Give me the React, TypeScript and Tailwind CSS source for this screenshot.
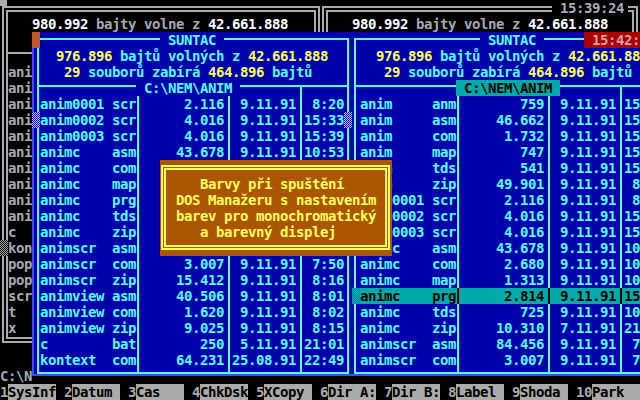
type FileRow = [string, string, string, string, string];

const leftFiles: FileRow[] = [
    ["anim0001", "scr", "2.116", "9.11.91", "8:20"],
    ["anim0002", "scr", "4.016", "9.11.91", "15:33"],
    ["anim0003", "scr", "4.016", "9.11.91", "15:39"],
    ["animc", "asm", "43.678", "9.11.91", "10:53"],
    ["animc", "com", "2.680", "9.11.91", "10:54"],
    ["animc", "map", "1.313", "9.11.91", "10:54"],
    ["animc", "prg", "2.814", "9.11.91", "15:40"],
    ["animc", "tds", "725", "9.11.91", "10:54"],
    ["animc", "zip", "10.310", "7.11.91", "21:12"],
    ["animscr", "asm", "84.456", "9.11.91", "7:49"],
    ["animscr", "com", "3.007", "9.11.91", "7:50"],
    ["animscr", "zip", "15.412", "9.11.91", "8:16"],
    ["animview", "asm", "40.506", "9.11.91", "8:01"],
    ["animview", "com", "1.620", "9.11.91", "8:02"],
    ["animview", "zip", "9.025", "9.11.91", "8:15"],
    ["c", "bat", "250", "5.11.91", "21:01"],
    ["kontext", "com", "64.231", "25.08.91", "22:49"],
];

const rightFiles: FileRow[] = [
    ["anim", "anm", "759", "9.11.91", "15:31"],
    ["anim", "asm", "46.662", "9.11.91", "15:30"],
    ["anim", "com", "1.732", "9.11.91", "15:31"],
    ["anim", "map", "747", "9.11.91", "15:31"],
    ["anim", "tds", "541", "9.11.91", "15:31"],
    ["anim", "zip", "49.901", "9.11.91", "8:22"],
    ["anim0001", "scr", "2.116", "9.11.91", "8:20"],
    ["anim0002", "scr", "4.016", "9.11.91", "15:33"],
    ["anim0003", "scr", "4.016", "9.11.91", "15:39"],
    ["animc", "asm", "43.678", "9.11.91", "10:53"],
    ["animc", "com", "2.680", "9.11.91", "10:54"],
    ["animc", "map", "1.313", "9.11.91", "10:54"],
    ["animc", "prg", "2.814", "9.11.91", "15:40"],
    ["animc", "tds", "725", "9.11.91", "10:54"],
    ["animc", "zip", "10.310", "7.11.91", "21:12"],
    ["animscr", "asm", "84.456", "9.11.91", "7:49"],
    ["animscr", "com", "3.007", "9.11.91", "7:50"],
];

const backNames = [
    "anim", "anim", "anim", "anim", "anim", "anim", "anim0001", "anim0002", "anim0003", "animc",
    "c", "kontext", "popup", "popdir", "scr", "t", "x",
];

const fkeys: [string, string][] = [
    ["1", "SysInf"],
    ["2", "Datum"],
    ["3", "Cas"],
    ["4", "ChkDsk"],
    ["5", "XCopy"],
    ["6", "Dir A:"],
    ["7", "Dir B:"],
    ["8", "Label"],
    ["9", "Shoda"],
    ["10", "Park"],
];

const panelCls = {
    left: {
        box: "ml-[5px] w-[312px]",
        colA: "w-[100px] pl-[1px]",
        title: "pl-[121px]",
        info1: "pl-[17px]",
        info2: "pl-[25px]",
        path: "pl-[97px]",
    },
    right: {
        box: "ml-[2px] w-[315px]",
        colA: "w-[103px] pl-[4px]",
        title: "pl-[124px]",
        info1: "pl-[20px]",
        info2: "pl-[28px]",
        path: "pl-[100px]",
    },
};

function FileLine({ f, active, colA, h = "h-4" }: { f?: FileRow; active?: boolean; colA: string; h?: string }) {
    const line = active ? "border-black" : "border-[#55ffff]";
    return (
        <div className={`flex shrink-0 ${h} ${active ? "bg-[#00aaaa] text-black" : "text-[#55ffff]"}`}>
            <div className={`flex shrink-0 border-r-2 ${line} ${colA}`}>
                <span className="w-[72px] shrink-0 whitespace-pre">{f?.[0]}</span>
                <span className="whitespace-pre">{f?.[1]}</span>
            </div>
            <div className={`w-[91px] shrink-0 border-r-2 ${line} pr-[4px] text-right`}>{f?.[2]}</div>
            <div className={`w-[72px] shrink-0 border-r-2 ${line} pr-[4px] text-right`}>{f?.[3]}</div>
            <div className="flex-1 pr-[3px] text-right whitespace-pre">{f?.[4]}</div>
        </div>
    );
}

function Panel({ side, files, activeRow }: { side: "left" | "right"; files: FileRow[]; activeRow?: number }) {
    const c = panelCls[side];
    const isRight = side === "right";

    return (
        <div className="relative w-[320px] shrink-0 pt-[6px]">
            <div className={`flex h-[336px] flex-col border-2 border-[#55ffff] ${c.box}`}>

                {/* title on the top line */}
                <div className={`flex h-2 shrink-0 ${c.title}`}>
                    <div className="-mt-2 h-4 w-16 bg-[#0000aa] text-center text-[#55ffff]">SUNTAC</div>
                </div>

                <div className={`h-4 shrink-0 whitespace-pre text-[#55ffff] ${c.info1}`}>
                    <span className="text-[#ffff55]">976.896</span>
                    {" bajtů volných z "}
                    <span className="text-[#ffff55]">42.661.888</span>
                </div>
                <div className={`h-4 shrink-0 whitespace-pre text-[#55ffff] ${c.info2}`}>
                    <span className="text-[#ffff55]">29</span>
                    {" souborů zabírá "}
                    <span className="text-[#ffff55]">464.896</span>
                    {" bajtů"}
                </div>

                {/* path on the separator */}
                <div className={`flex h-[7px] shrink-0 border-b-2 border-[#55ffff] ${c.path}`}>
                    <div
                        className={`relative z-10 h-4 shrink-0 whitespace-pre ${
                            isRight ? "bg-[#00aaaa] text-black" : "bg-[#0000aa] text-[#55ffff]"
                        }`}
                    >
                        {" C:\\NEM\\ANIM "}
                    </div>
                </div>

                <FileLine colA={c.colA} h="h-[9px]" />
                {files.map((f, i) => (
                    <FileLine key={`${f[0]}-${f[1]}-${i}`} f={f} colA={c.colA} active={i === activeRow} />
                ))}
                <FileLine colA={c.colA} h="h-1" />
            </div>

            {isRight ? (
                <>
                    <div className="absolute left-[232px] top-0 h-4 whitespace-pre bg-[#aa0000] pl-2 text-[#d4a4a4]">
                        15:42:07
                    </div>
                    <div className="absolute left-0 top-[256px] h-4 w-2 bg-[repeating-conic-gradient(#2a6ad0_0%_25%,#00aaaa_0%_50%)] bg-[length:2px_2px]" />
                </>
            ) : (
                <>
                    <div className="absolute left-0 top-0 h-4 w-2 bg-[#c0582c]" />
                    <div className="absolute left-0 top-[80px] h-4 w-2 bg-[repeating-conic-gradient(#55ffff_0%_25%,#0000aa_0%_50%)] bg-[length:2px_2px]" />
                    <div className="absolute left-[312px] top-[80px] h-4 w-2 bg-[repeating-conic-gradient(#55ffff_0%_25%,#0000aa_0%_50%)] bg-[length:2px_2px]" />
                </>
            )}
        </div>
    );
}

function FreeLine() {
    return (
        <div className="h-4 whitespace-pre pl-6 text-[#aaaaaa]">
            <span className="text-white">980.992</span>
            {" bajty volne z "}
            <span className="text-white">42.661.888</span>
        </div>
    );
}

export default function App() {
    return (
        <div className="relative h-[400px] w-[640px] overflow-hidden bg-black font-['DejaVu_Sans_Mono',monospace] text-[14px] leading-4 font-bold tracking-[-0.43px]">
            <div className="relative h-[368px]">

                {/* background manager */}
                <div className="flex gap-[2px] pl-[2px] pt-[6px]">
                    <div className="flex h-[337px] w-[318px] flex-col border-[6px] border-double border-[#aaaaaa]">
                        <div className="h-1 shrink-0" />
                        <FreeLine />
                        <div className="h-5 shrink-0" />
                        <div className="h-[2px] shrink-0 bg-[#aaaaaa]" />
                        <div className="h-[10px] shrink-0" />
                        {backNames.map((n, i) => (
                            <div key={`${n}-${i}`} className="h-4 shrink-0 whitespace-pre text-[#aaaaaa]">
                                {n}
                            </div>
                        ))}
                    </div>
                    <div className="flex h-[337px] w-[316px] flex-col border-[6px] border-double border-[#aaaaaa]">
                        <div className="h-1 shrink-0" />
                        <FreeLine />
                    </div>
                </div>

                <div className="absolute left-0 top-0 h-[6px] w-[7px] bg-[#aaaaaa]" />
                <div className="absolute left-[552px] top-0 h-4 bg-black pl-2 pr-1 text-[#aaaaaa]">15:39:24</div>
                <div className="absolute left-0 top-[240px] h-4 w-2 bg-[repeating-conic-gradient(#aaaaaa_0%_25%,#000000_0%_50%)] bg-[length:2px_2px]" />

                {/* front manager window */}
                <div className="absolute left-[32px] top-[32px] flex h-[344px] w-[640px] bg-[#0000aa] shadow-[inset_2px_-2px_0_#3050ff]">
                    <Panel side="left" files={leftFiles} />
                    <Panel side="right" files={rightFiles} activeRow={12} />
                </div>

                {/* message box */}
                <div className="absolute left-[160px] top-[160px] h-[96px] w-[232px] bg-[#aa5500] pl-px pt-[5px]">
                    <div className="h-[85px] w-[229px] whitespace-pre border-[5px] border-double border-[#ffff55] pl-[10px] pt-[6px] text-[#ffff55]">
                        <div className="h-4">{"   Barvy při spuštění"}</div>
                        <div className="h-4">DOS Manažeru s nastavením</div>
                        <div className="h-4">barev pro monochromatický</div>
                        <div className="h-4">{"   a barevný displej"}</div>
                    </div>
                </div>
            </div>

            <div className="h-4 whitespace-pre text-[#aaaaaa]">C:\N</div>

            {/* function keys */}
            <div className="flex h-4">
                {fkeys.map(([n, label]) => (
                    <div key={n} className="flex w-16 shrink-0">
                        <span className="whitespace-pre text-[#aaaaaa]">{n}</span>
                        <span className="w-12 shrink-0 whitespace-pre bg-[#aaaaaa] text-black">{label}</span>
                    </div>
                ))}
            </div>
        </div>
    );
}
